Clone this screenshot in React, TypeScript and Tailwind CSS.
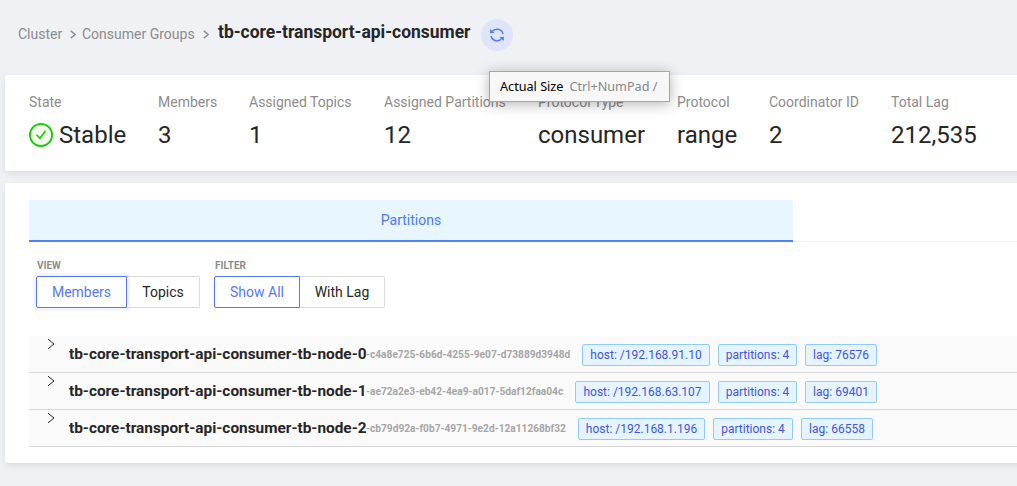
import React from "react";

const stats = [
  { label: "State", value: "Stable", ok: true, w: "w-[97px]" },
  { label: "Members", value: "3", w: "w-[59px]" },
  { label: "Assigned Topics", value: "1", w: "w-[103px]" },
  { label: "Assigned Partitions", value: "12", w: "w-[122px]" },
  { label: "Protocol Type", value: "consumer", w: "w-[107px]" },
  { label: "Protocol", value: "range", w: "w-[60px]" },
  { label: "Coordinator ID", value: "2", w: "w-[90px]" },
  { label: "Total Lag", value: "212,535", w: "w-[86px]" },
];

const members = [
  { name: "tb-core-transport-api-consumer-tb-node-0", id: "-c4a8e725-6b6d-4255-9e07-d73889d3948d", idW: "w-[216px]", tags: [["host: /192.168.91.10", "w-[128px]"], ["partitions: 4", "w-[79px]"], ["lag: 76576", "w-[72px]"]] },
  { name: "tb-core-transport-api-consumer-tb-node-1", id: "-ae72a2e3-eb42-4ea9-a017-5daf12faa04c", idW: "w-[209px]", tags: [["host: /192.168.63.107", "w-[135px]"], ["partitions: 4", "w-[79px]"], ["lag: 69401", "w-[72px]"]] },
  { name: "tb-core-transport-api-consumer-tb-node-2", id: "-cb79d92a-f0b7-4971-9e2d-12a11268bf32", idW: "w-[212px]", tags: [["host: /192.168.1.196", "w-[127px]"], ["partitions: 4", "w-[80px]"], ["lag: 66558", "w-[72px]"]] },
];

function Chevron({ className }: { className: string }) {
  return (
    <svg viewBox="0 0 8 12" className={className} fill="none" stroke="currentColor">
      <path d="M1 1.2 7 6 1 10.8" />
    </svg>
  );
}

function CheckCircle() {
  return (
    <svg viewBox="0 0 24 24" className="h-6 w-6 shrink-0" fill="none" stroke="#14cc00">
      <circle cx="12" cy="12" r="11.1" fill="#f6ffed" strokeWidth="1.8" />
      <path d="M7.5 11.8 11 15.3 16.4 8" strokeWidth="1.6" />
    </svg>
  );
}

function Sync() {
  return (
    <svg viewBox="0 0 14 14" className="h-[14px] w-[14px] text-[#4a80ff]" fill="none" stroke="currentColor" strokeWidth="1.5">
      <path d="M2 3.9A6.1 6.1 0 0 1 13 6M12 10.1A6.1 6.1 0 0 1 1 8" />
      <path d="M.1 1V5.3L4.4 4.9ZM13.9 13V8.7L9.6 9.1Z" fill="currentColor" stroke="none" />
    </svg>
  );
}

export default function App() {
  return (
    <div className="relative h-[486px] w-[1017px] overflow-hidden bg-[#eff1f5] pl-[5px] font-['Roboto',sans-serif] text-sm text-[#262626]">
      <header className="flex h-[75px] items-start pl-[13px] text-[#8c8c8c]">
        <span className="mt-[23px] w-[44px] whitespace-nowrap leading-[22px]">Cluster</span>
        <Chevron className="ml-[8px] mt-[30px] h-[9px] w-[6px] stroke-[2]" />
        <span className="ml-[6px] mt-[23px] w-[113px] whitespace-nowrap leading-[22px]">Consumer Groups</span>
        <Chevron className="ml-[8px] mt-[30px] h-[9px] w-[6px] stroke-[2]" />
        <h1 className="ml-[9px] mt-[18px] w-[253px] whitespace-nowrap text-[17.47px] font-bold leading-[28px] text-[#262626]">tb-core-transport-api-consumer</h1>
        <button className="ml-[10px] mt-[19px] flex h-8 w-8 items-center justify-center rounded-full bg-[#dfe4f9]">
          <Sync />
        </button>
      </header>

      <section className="flex h-[96px] w-[1030px] gap-8 rounded-[3px] bg-white px-6 pt-4 shadow-[0_3px_7px_rgba(0,0,0,0.08)]">
        {stats.map((s) => (
          <div key={s.label} className={"shrink-0 whitespace-nowrap " + s.w}>
            <div className="leading-[22px] text-[#8c8c8c]">{s.label}</div>
            <div className="mt-[3px] flex h-[38px] items-center gap-[6px] text-2xl leading-[38px]">
              {s.ok && <CheckCircle />}
              <span>{s.value}</span>
            </div>
          </div>
        ))}
      </section>

      <section className="mt-3 h-[280px] w-[1030px] rounded-[3px] bg-white pl-6 pt-[17px] shadow-[0_3px_7px_rgba(0,0,0,0.08)]">
        <div className="flex h-[42px] border-b border-[#f0f0f0]">
          <div className="h-[42px] w-[764px] border-b-2 border-[#4f83f0] bg-[#e7f6ff] text-center leading-[40px] text-[#5078f7]">Partitions</div>
        </div>

        <div className="flex gap-[14px] pl-[7px] pt-[17px]">
          <div>
            <div className="h-[17px] pl-px text-[10px] font-bold leading-[14px] text-[#8c8c8c]">VIEW</div>
            <div className="flex h-8 whitespace-nowrap text-center leading-[30px]">
              <div className="w-[91px] rounded-l-[2px] border border-[#5678f8] text-[#5678f8] shadow-[0_0_0_3px_rgba(86,120,248,0.08)]">Members</div>
              <div className="w-[73px] rounded-r-[2px] border border-l-0 border-[#d9d9d9]">Topics</div>
            </div>
          </div>
          <div>
            <div className="h-[17px] pl-px text-[10px] font-bold leading-[14px] text-[#8c8c8c]">FILTER</div>
            <div className="flex h-8 whitespace-nowrap text-center leading-[30px]">
              <div className="w-[86px] rounded-l-[2px] border border-[#5678f8] text-[#5678f8]">Show All</div>
              <div className="w-[85px] rounded-r-[2px] border border-l-0 border-[#d9d9d9]">With Lag</div>
            </div>
          </div>
        </div>

        <div className="mt-7">
          {members.map((m) => (
            <div key={m.id} className="flex h-[37px] items-start whitespace-nowrap border-b border-[#d9d9d9] bg-[#fafafa] pl-[18px]">
              <Chevron className="mt-[2px] h-[12px] w-[8px] stroke-[1] text-[#222]" />
              <span className="ml-[14px] mt-[7px] w-[297px] text-[15.38px] font-bold leading-[22px]">{m.name}</span>
              <span className={"mt-[9px] text-[10.17px] font-bold leading-[20px] text-[#a6a6a6] " + m.idW}>{m.id}</span>
              <div className="mt-2 flex gap-2">
                {m.tags.map(([text, w]) => (
                  <span key={text} className={"h-[22px] rounded-[2px] border border-[#91caff] bg-[#e6f4ff] text-center text-xs leading-5 text-[#3f56dc] " + w}>{text}</span>
                ))}
              </div>
            </div>
          ))}
        </div>
      </section>

      <div className="absolute left-[489px] top-[71px] flex h-[31px] w-[181px] items-center gap-[6px] whitespace-nowrap border border-[#a6a6a6] bg-[#f7f7f7] pl-[10px] font-['Noto_Sans',sans-serif] text-[12.65px] shadow-[0_2px_14px_rgba(0,0,0,0.3)]">
        <span className="text-black">Actual Size</span>
        <span className="text-[#888]">Ctrl+NumPad /</span>
      </div>
    </div>
  );
}
